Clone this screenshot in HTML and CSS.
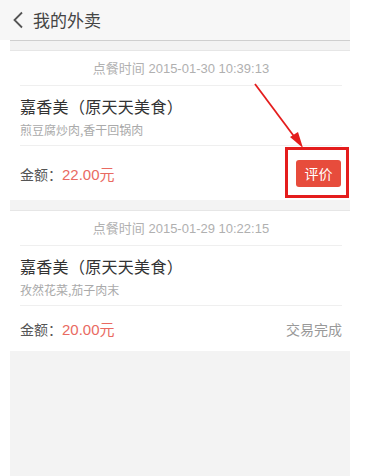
FILE: index.html
```html
<!DOCTYPE html>
<html>
<head>
<meta charset="utf-8">
<link rel="stylesheet" href="styles.css">
</head>
<body>
<div class="app">
  <div class="header">
    <svg class="back" width="12" height="18" viewBox="0 0 12 18"><path d="M10 1.5 L2.5 9 L10 16.5" fill="none" stroke="#555" stroke-width="1.8"/></svg>
    <span class="title">我的外卖</span>
  </div>
  <div class="content">
    <div class="card">
      <div class="time">点餐时间 2015-01-30 10:39:13</div>
      <div class="info">
        <div class="shop">嘉香美（原天天美食）</div>
        <div class="items">煎豆腐炒肉,香干回锅肉</div>
      </div>
      <div class="amount amount-btn">
        <div class="price"><span class="label">金额：</span><span class="money">22.00元</span></div>
        <div class="btn">评价</div>
      </div>
    </div>
    <div class="card">
      <div class="time">点餐时间 2015-01-29 10:22:15</div>
      <div class="info">
        <div class="shop">嘉香美（原天天美食）</div>
        <div class="items">孜然花菜,茄子肉末</div>
      </div>
      <div class="amount">
        <div class="price"><span class="label">金额：</span><span class="money">20.00元</span></div>
        <div class="status">交易完成</div>
      </div>
    </div>
  </div>
  <div class="mark-box"></div>
  <svg class="arrow" width="374" height="476" viewBox="0 0 374 476">
    <line x1="255" y1="84" x2="299" y2="143" stroke="#e41d1d" stroke-width="1.8"/>
    <polygon points="303,148 290,137 298,132" fill="#e41d1d"/>
  </svg>
</div>
</body>
</html>
```
FILE: styles.css
```css
* { box-sizing: border-box; }
html, body { margin: 0; padding: 0; background: #fff; }
body {
  font-family: "Noto Sans CJK SC", "Liberation Sans", sans-serif;
  width: 374px;
  height: 476px;
  overflow: hidden;
}
.app { position: relative; width: 374px; height: 476px; }
.header {
  width: 350px;
  height: 40px;
  background: #f7f7f7;
  display: flex;
  align-items: center;
  padding-left: 12px;
}
.back { display: block; margin-right: 9px; }
.title { font-size: 17px; color: #444; line-height: 20px; }
.content {
  margin-left: 10px;
  width: 340px;
  height: 436px;
  background: #f3f3f3;
  border-top: 1px solid #cfcfcf;
  padding-top: 9px;
}
.card {
  background: #fff;
  border-top: 1px solid #e6e6e6;
  padding: 0 8px 0 10px;
  margin-bottom: 10px;
}
.time {
  height: 35px;
  line-height: 35px;
  text-align: center;
  font-size: 13px;
  color: #b0b0b0;
  border-bottom: 1px solid #efefef;
  font-family: "Liberation Sans", "Noto Sans CJK SC", sans-serif;
}
.info {
  height: 60px;
  border-bottom: 1px solid #efefef;
  padding-top: 9px;
}
.shop { font-size: 16px; color: #333; line-height: 22px; letter-spacing: 0.3px; }
.items { font-size: 12px; color: #aaa; line-height: 16px; margin-top: 5px; }
.amount {
  height: 45px;
  display: flex;
  align-items: center;
  justify-content: space-between;
}
.amount-btn { height: 54px; }
.price { font-size: 14px; }
.label { color: #555; }
.money { color: #e96a62; font-family: "Liberation Sans", "Noto Sans CJK SC", sans-serif; font-size: 15px; }
.btn {
  width: 45px;
  height: 27px;
  line-height: 27px;
  text-align: center;
  background: #e74c3c;
  color: #fff;
  font-size: 14px;
  border-radius: 3px;
  margin-right: 1px;
}
.status { font-size: 14px; color: #999; }
.mark-box {
  position: absolute;
  left: 285px;
  top: 147px;
  width: 64px;
  height: 51px;
  border: 3px solid #e41d1d;
}
.arrow { position: absolute; left: 0; top: 0; pointer-events: none; }
```
